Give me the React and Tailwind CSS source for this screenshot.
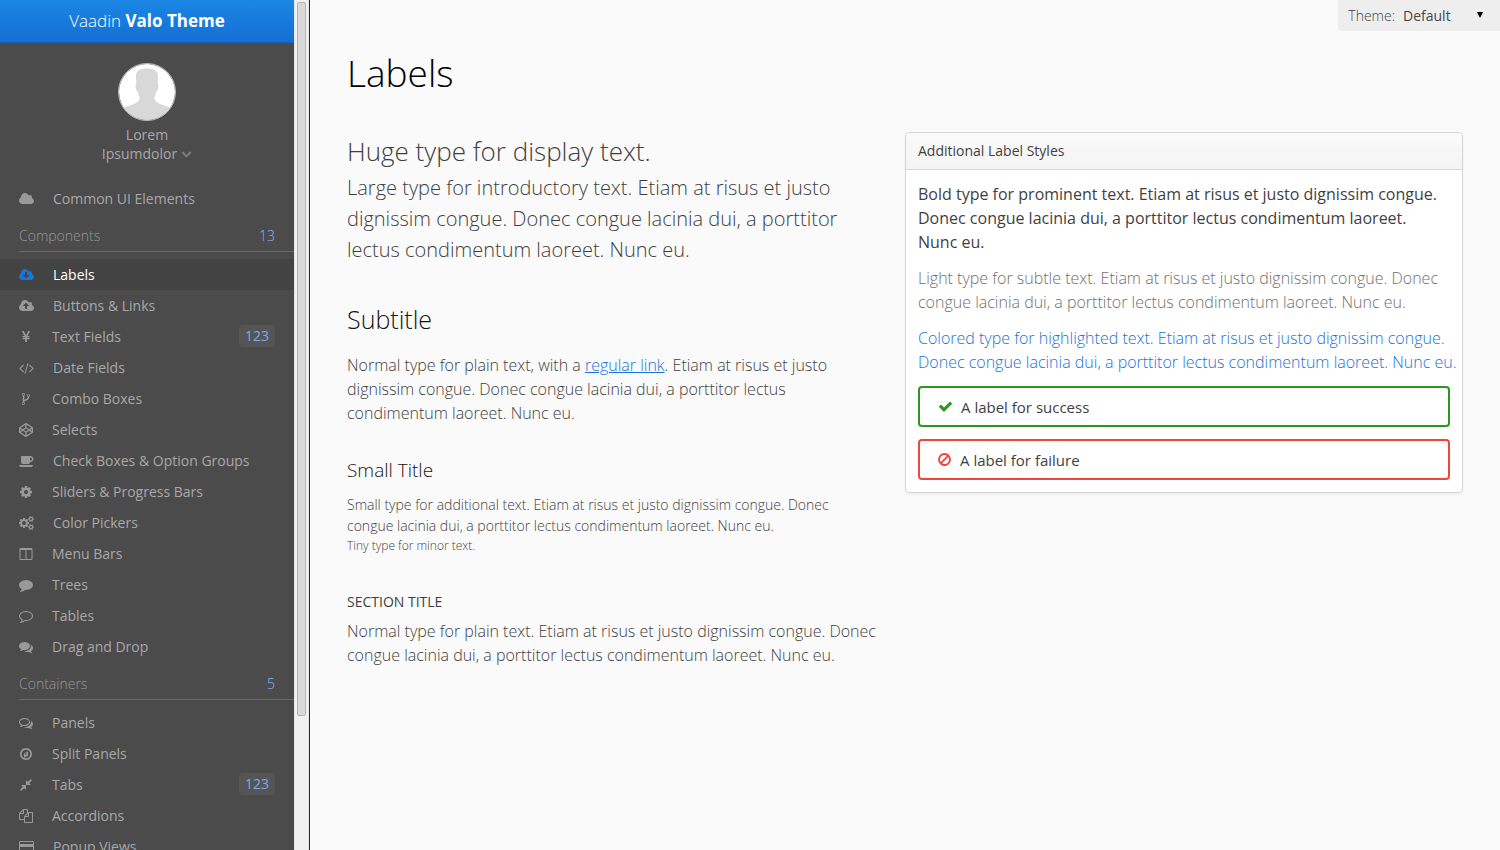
import React from "react";

const ICONS = {
  cloud: [1920, "M1920 1152q0 159-112.5 271.5t-271.5 112.5h-1088q-185 0-316.5-131.5t-131.5-316.5q0-132 71-241.5t187-163.5q-2-28-2-43 0-212 150-362t362-150q158 0 286.5 88t187.5 230q70-62 166-62 106 0 181 75t75 181q0 75-41 138 129 30 213 134.5t84 239.5z"],
  cloudDownload: [1920, "M1280 928q0-14-9-23t-23-9h-224v-352q0-13-9.5-22.5t-22.5-9.5h-192q-13 0-22.5 9.5t-9.5 22.5v352h-224q-13 0-22.5 9.5t-9.5 22.5q0 14 9 23l352 352q9 9 23 9t23-9l351-351q10-12 10-24zm640 224q0 159-112.5 271.5t-271.5 112.5h-1088q-185 0-316.5-131.5t-131.5-316.5q0-130 70-240t188-165q-2-30-2-43 0-212 150-362t362-150q156 0 285.5 87t188.5 231q71-62 166-62 106 0 181 75t75 181q0 76-41 138 130 31 213.5 135.5t83.5 238.5z"],
  cloudUpload: [1920, "M1280 864q0-14-9-23l-352-352q-9-9-23-9t-23 9l-351 351q-10 12-10 24 0 14 9 23t23 9h224v352q0 13 9.5 22.5t22.5 9.5h192q13 0 22.5-9.5t9.5-22.5v-352h224q13 0 22.5-9.5t9.5-22.5zm640 288q0 159-112.5 271.5t-271.5 112.5h-1088q-185 0-316.5-131.5t-131.5-316.5q0-130 70-240t188-165q-2-30-2-43 0-212 150-362t362-150q156 0 285.5 87t188.5 231q71-62 166-62 106 0 181 75t75 181q0 76-41 138 130 31 213.5 135.5t83.5 238.5z"],
  yen: [1792, "M985.5 1536h-172q-13 0-22.5-9t-9.5-23v-330h-288q-13 0-22.5-9t-9.5-23v-103q0-13 9.5-22.5t22.5-9.5h288v-85h-288q-13 0-22.5-9t-9.5-23v-104q0-13 9.5-22.5t22.5-9.5h214l-321-578q-8-16 0-32 10-16 28-16h194q19 0 29 18l215 425q19 38 56 125 10-24 30.5-68t27.5-61l191-420q8-19 29-19h191q17 0 27 16 9 14 1 31l-313 579h215q13 0 22.5 9.5t9.5 22.5v104q0 14-9.5 23t-22.5 9h-290v85h290q13 0 22.5 9.5t9.5 22.5v103q0 14-9.5 23t-22.5 9h-290v330q0 13-9.5 22.5t-22.5 9.5z"],
  code: [1920, "M617 1399l-50 50q-10 10-23 10t-23-10l-466-466q-10-10-10-23t10-23l466-466q10-10 23-10t23 10l50 50q10 10 10 23t-10 23l-393 393 393 393q10 10 10 23t-10 23zm591-1067l-373 1291q-4 13-15.5 19.5t-23.5 2.5l-62-17q-13-4-19.5-15.5t-2.5-24.5l373-1291q4-13 15.5-19.5t23.5-2.5l62 17q13 4 19.5 15.5t2.5 24.5zm657 651l-466 466q-10 10-23 10t-23-10l-50-50q-10-10-10-23t10-23l393-393-393-393q-10-10-10-23t10-23l50-50q10-10 23-10t23 10l466 466q10 10 10 23t-10 23z"],
  codeFork: [1792, "M672 1472q0-40-28-68t-68-28-68 28-28 68 28 68 68 28 68-28 28-68zm0-1152q0-40-28-68t-68-28-68 28-28 68 28 68 68 28 68-28 28-68zm640 128q0-40-28-68t-68-28-68 28-28 68 28 68 68 28 68-28 28-68zm96 0q0 52-26 96.5t-70 69.5q-2 287-226 414-67 38-203 81-128 40-169.5 71t-41.5 100v26q44 25 70 69.5t26 96.5q0 80-56 136t-136 56-136-56-56-136q0-52 26-96.5t70-69.5v-820q-44-25-70-69.5t-26-96.5q0-80 56-136t136-56 136 56 56 136q0 52-26 96.5t-70 69.5v497q54-26 154-57 55-17 87.5-29.5t70.5-31 59-39.5 40.5-51 28-69.5 8.5-91.5q-44-25-70-69.5t-26-96.5q0-80 56-136t136-56 136 56 56 136z"],
  codepen: [1792, "M216 1169l603 402v-359l-334-223zm-62-144l193-129-193-129v258zm819 546l603-402-269-180-334 223v359zm-77-493l272-182-272-182-272 182zm-411-275l334-223v-359l-603 402zm960 93l193 129v-258zm-138-93l269-180-603-402v359zm485-180v546q0 41-34 64l-819 546q-21 13-43 13t-43-13l-819-546q-34-23-34-64v-546q0-41 34-64l819-546q21-13 43-13t43 13l819 546q34 23 34 64z"],
  coffee: [1920, "M1664 640q0-80-56-136t-136-56h-64v384h64q80 0 136-56t56-136zm-1664 768h1792q0 106-75 181t-181 75h-1280q-106 0-181-75t-75-181zm1856-768q0 159-112.5 271.5t-271.5 112.5h-64v32q0 92-66 158t-158 66h-704q-92 0-158-66t-66-158v-736q0-26 19-45t45-19h1152q159 0 271.5 112.5t112.5 271.5z"],
  cog: [1792, "M1152 896q0-106-75-181t-181-75-181 75-75 181 75 181 181 75 181-75 75-181zm512-109v222q0 12-8 23t-20 13l-185 28q-19 54-39 91 35 50 107 138 10 12 10 25t-9 23q-27 37-99 108t-94 71q-12 0-26-9l-138-108q-44 23-91 38-16 136-29 186-7 28-36 28h-222q-14 0-24.5-8.5t-11.5-21.5l-28-184q-49-16-90-37l-141 107q-10 9-25 9-14 0-25-11-126-114-165-168-7-10-7-23 0-12 8-23 15-21 51-66.5t54-70.5q-27-50-41-99l-183-27q-13-2-21-12.5t-8-23.5v-222q0-12 8-23t19-13l186-28q14-46 39-92-40-57-107-138-10-12-10-24 0-10 9-23 26-36 98.5-107.5t94.5-71.5q13 0 26 10l138 107q44-23 91-38 16-136 29-186 7-28 36-28h222q14 0 24.5 8.5t11.5 21.5l28 184q49 16 90 37l142-107q9-9 24-9 13 0 25 10 129 119 165 170 7 8 7 22 0 12-8 23-15 21-51 66.5t-54 70.5q26 50 41 98l183 28q13 2 21 12.5t8 23.5z"],
  cogs: [1920, "M896 896q0-106-75-181t-181-75-181 75-75 181 75 181 181 75 181-75 75-181zm768 512q0-52-38-90t-90-38-90 38-38 90q0 53 37.5 90.5t90.5 37.5 90.5-37.5 37.5-90.5zm0-1024q0-52-38-90t-90-38-90 38-38 90q0 53 37.5 90.5t90.5 37.5 90.5-37.5 37.5-90.5zm-384 421v185q0 10-7 19.5t-16 10.5l-155 24q-11 35-32 76 34 48 90 115 7 11 7 20 0 12-7 19-23 30-82.5 89.5t-78.5 59.5q-11 0-21-7l-115-90q-37 19-77 31-11 108-23 155-7 24-30 24h-186q-11 0-20-7.5t-10-17.5l-23-153q-34-10-75-31l-118 89q-7 7-20 7-11 0-21-8-144-133-144-160 0-9 7-19 10-14 41-53t47-61q-23-44-35-82l-152-24q-10-1-17-9.5t-7-19.5v-185q0-10 7-19.5t16-10.5l155-24q11-35 32-76-34-48-90-115-7-11-7-20 0-12 7-20 22-30 82-89t79-59q11 0 21 7l115 90q34-18 77-32 11-108 23-154 7-24 30-24h186q11 0 20 7.5t10 17.5l23 153q34 10 75 31l118-89q8-7 20-7 11 0 21 8 144 133 144 160 0 8-7 19-12 16-42 54t-45 60q23 48 34 82l152 23q10 2 17 10.5t7 19.5zm640 533v140q0 16-149 31-12 27-30 52 51 113 51 138 0 4-4 7-122 71-124 71-8 0-46-47t-52-68q-20 2-30 2t-30-2q-14 21-52 68t-46 47q-2 0-124-71-4-3-4-7 0-25 51-138-18-25-30-52-149-15-149-31v-140q0-16 149-31 13-29 30-52-51-113-51-138 0-4 4-7 4-2 35-20t59-34 30-16q8 0 46 46.5t52 67.5q20-2 30-2t30 2q51-71 92-112l6-2q4 0 124 70 4 3 4 7 0 25-51 138 17 23 30 52 149 15 149 31zm0-1024v140q0 16-149 31-12 27-30 52 51 113 51 138 0 4-4 7-122 71-124 71-8 0-46-47t-52-68q-20 2-30 2t-30-2q-14 21-52 68t-46 47q-2 0-124-71-4-3-4-7 0-25 51-138-18-25-30-52-149-15-149-31v-140q0-16 149-31 13-29 30-52-51-113-51-138 0-4 4-7 4-2 35-20t59-34 30-16q8 0 46 46.5t52 67.5q20-2 30-2t30 2q51-71 92-112l6-2q4 0 124 70 4 3 4 7 0 25-51 138 17 23 30 52 149 15 149 31z"],
  columns: [1792, "M224 1536h608v-1152h-640v1120q0 13 9.5 22.5t22.5 9.5zm1376-32v-1120h-640v1152h608q13 0 22.5-9.5t9.5-22.5zm128-1216v1216q0 66-47 113t-113 47h-1344q-66 0-113-47t-47-113v-1216q0-66 47-113t113-47h1344q66 0 113 47t47 113z"],
  comment: [1792, "M1792 896q0 174-120 321.5t-326 233-450 85.5q-70 0-145-8-198 175-460 242-49 14-114 22-17 2-30.5-9t-17.5-29v-1q-3-4-.5-12t2-10 4.5-9.5l6-9 7-8.5 8-9q7-8 31-34.5t34.5-38 31-39.5 32.5-51 27-59 26-76q-157-89-247.5-220t-90.5-281q0-130 71-248.5t191-204.5 286-136.5 348-50.5q244 0 450 85.5t326 233 120 321.5z"],
  commentO: [1792, "M896 384q-204 0-381.5 69.5t-282 187.5-104.5 255q0 112 71.5 213.5t201.5 175.5l87 50-27 96q-24 91-70 172 152-63 275-171l43-38 57 6q69 8 130 8 204 0 381.5-69.5t282-187.5 104.5-255-104.5-255-282-187.5-381.5-69.5zm896 512q0 174-120 321.5t-326 233-450 85.5q-70 0-145-8-198 175-460 242-49 14-114 22h-5q-15 0-27-10.5t-16-27.5v-1q-3-4-.5-12t2-10 4.5-9.5l6-9 7-8.5 8-9q7-8 31-34.5t34.5-38 31-39.5 32.5-51 27-59 26-76q-157-89-247.5-220t-90.5-281q0-174 120-321.5t326-233 450-85.5 450 85.5 326 233 120 321.5z"],
  comments: [1792, "M1408 768q0 139-94 257t-256.5 186.5-353.5 68.5q-86 0-176-16-124 88-278 128-36 9-86 16h-3q-11 0-20.5-8t-11.5-21q-1-3-1-6.5t.5-6.5 2-6l2.5-5 3.5-5.5 4-5 4.5-5 4-4.5q5-6 23-25t26-29.5 22.5-29 25-38.5 20.5-44q-124-72-195-177t-71-224q0-139 94-257t256.5-186.5 353.5-68.5 353.5 68.5 256.5 186.5 94 257zm384 256q0 120-71 224.5t-195 176.5q10 24 20.5 44t25 38.5 22.5 29 26 29.5 23 25q1 1 4 4.5t4.5 5 4 5 3.5 5.5l2.5 5 2 6 .5 6.5-1 6.5q-3 14-13 22t-22 7q-50-7-86-16-154-40-278-128-90 16-176 16-271 0-472-132 58 4 88 4 161 0 309-45t264-129q125-92 192-212t67-254q0-77-23-152 129 71 204 178t75 230z"],
  commentsO: [1792, "M704 384q-153 0-286 52t-211.5 141-78.5 191q0 82 53 158t149 132l97 56-35 84q34-20 62-39l44-31 53 10q78 14 153 14 153 0 286-52t211.5-141 78.5-191-78.5-191-211.5-141-286-52zm0-128q191 0 353.5 68.5t256.5 186.5 94 257-94 257-256.5 186.5-353.5 68.5q-86 0-176-16-124 88-278 128-36 9-86 16h-3q-11 0-20.5-8t-11.5-21q-1-3-1-6.5t.5-6.5 2-6l2.5-5 3.5-5.5 4-5 4.5-5 4-4.5q5-6 23-25t26-29.5 22.5-29 25-38.5 20.5-44q-124-72-195-177t-71-224q0-139 94-257t256.5-186.5 353.5-68.5zm822 1169q10 24 20.5 44t25 38.5 22.5 29 26 29.5 23 25q1 1 4 4.5t4.5 5 4 5 3.5 5.5l2.5 5 2 6 .5 6.5-1 6.5q-3 14-13 22t-22 7q-50-7-86-16-154-40-278-128-90 16-176 16-271 0-472-132 58 4 88 4 161 0 309-45t264-129q125-92 192-212t67-254q0-77-23-152 129 71 204 178t75 230q0 120-71 224.5t-195 176.5z"],
  compass: [1792, "M768 1024l256-128-256-128v256zm384-435v542l-512 256v-542zm288 307q0-148-73-273t-198-198-273-73-273 73-198 198-73 273 73 273 198 198 273 73 273-73 198-198 73-273zm224 0q0 209-103 385.5t-279.5 279.5-385.5 103-385.5-103-279.5-279.5-103-385.5 103-385.5 279.5-279.5 385.5-103 385.5 103 279.5 279.5 103 385.5z"],
  compress: [1792, "M896 960v448q0 26-19 45t-45 19-45-19l-144-144-332 332q-10 10-23 10t-23-10l-114-114q-10-10-10-23t10-23l332-332-144-144q-19-19-19-45t19-45 45-19h448q26 0 45 19t19 45zm755-672q0 13-10 23l-332 332 144 144q19 19 19 45t-19 45-45 19h-448q-26 0-45-19t-19-45v-448q0-26 19-45t45-19 45 19l144 144 332-332q10-10 23-10t23 10l114 114q10 10 10 23z"],
  files: [1792, "M1696 384q40 0 68 28t28 68v1216q0 40-28 68t-68 28h-960q-40 0-68-28t-28-68v-288h-544q-40 0-68-28t-28-68v-672q0-40 20-88t48-76l408-408q28-28 76-48t88-20h416q40 0 68 28t28 68v328q68-40 128-40h416zm-544 213l-299 299h299v-299zm-640-384l-299 299h299v-299zm196 647l316-316v-416h-384v416q0 40-28 68t-68 28h-416v640h512v-256q0-40 20-88t48-76zm956 804v-1152h-384v416q0 40-28 68t-68 28h-416v640h896z"],
  card: [1920, "M1760 128q66 0 113 47t47 113v1216q0 66-47 113t-113 47h-1600q-66 0-113-47t-47-113v-1216q0-66 47-113t113-47h1600zm-1600 128q-13 0-22.5 9.5t-9.5 22.5v224h1664v-224q0-13-9.5-22.5t-22.5-9.5h-1600zm1600 1280q13 0 22.5-9.5t9.5-22.5v-608h-1664v608q0 13 9.5 22.5t22.5 9.5h1600zm-1504-128v-128h256v128h-256zm384 0v-128h384v128h-384z"],
  check: [1792, "M1671 566q0 40-28 68l-724 724-136 136q-28 28-68 28t-68-28l-136-136-362-362q-28-28-28-68t28-68l136-136q28-28 68-28t68 28l294 295 656-657q28-28 68-28t68 28l136 136q28 28 28 68z"],
  ban: [1792, "M1440 893q0-161-87-295l-754 753q137 89 297 89 111 0 211.5-43.5t173.5-116.5 116-174.5 43-212.5zm-999 299l755-754q-135-91-300-91-148 0-273 73t-198 199-73 274q0 162 89 299zm1223-299q0 157-61 300t-163.5 246-245 164-298.5 61-298.5-61-245-164-163.5-246-61-300 61-299.5 163.5-245.5 245-164 298.5-61 298.5 61 245 164 163.5 245.5 61 299.5z"],
  chevronDown: [1792, "M1683 808l-742 741q-19 19-45 19t-45-19l-742-741q-19-19-19-45.5t19-45.5l166-165q19-19 45-19t45 19l531 531 531-531q19-19 45-19t45 19l166 165q19 19 19 45.5t-19 45.5z"],
};

function Icon({ name, size, className = "" }) {
  const [width, path] = ICONS[name];
  const box = size || (width === 1920 ? "h-[14px] w-[15px]" : "size-[14px]");
  return (
    <svg viewBox={`0 0 ${width} 1792`} className={`shrink-0 fill-current ${box} ${className}`} aria-hidden="true">
      <path d={path} />
    </svg>
  );
}

const COMPONENTS = [
  { icon: "cloudDownload", label: "Labels", selected: true },
  { icon: "cloudUpload", label: "Buttons & Links" },
  { icon: "yen", label: "Text Fields", badge: "123" },
  { icon: "code", label: "Date Fields" },
  { icon: "codeFork", label: "Combo Boxes" },
  { icon: "codepen", label: "Selects" },
  { icon: "coffee", label: "Check Boxes & Option Groups" },
  { icon: "cog", label: "Sliders & Progress Bars" },
  { icon: "cogs", label: "Color Pickers" },
  { icon: "columns", label: "Menu Bars" },
  { icon: "comment", label: "Trees" },
  { icon: "commentO", label: "Tables" },
  { icon: "comments", label: "Drag and Drop" },
];

const CONTAINERS = [
  { icon: "commentsO", label: "Panels" },
  { icon: "compass", label: "Split Panels" },
  { icon: "compress", label: "Tabs", badge: "123" },
  { icon: "files", label: "Accordions" },
  { icon: "card", label: "Popup Views" },
];

function MenuItem({ icon, label, badge, selected }) {
  return (
    <a
      href="#"
      aria-current={selected ? "page" : undefined}
      className={`flex h-[31px] shrink-0 items-center px-[19px] ${selected ? "bg-[#434343] text-white" : "text-[#a8a8a8]"}`}
    >
      <Icon name={icon} className={selected ? "text-[#1b74d4]" : "text-[#999999]"} />
      <span className="ml-[19px] flex-1">{label}</span>
      {badge && (
        <span className="-mt-px rounded bg-[#555555] px-[6px] leading-[22px] text-[#78abec]">{badge}</span>
      )}
    </a>
  );
}

function MenuSection({ title, count, items }) {
  return (
    <section className="flex flex-col">
      <h2 className="mb-[7px] ml-[19px] flex h-[38px] items-center justify-between border-b border-[#686868] pt-[6px] pr-[19px] font-light text-[#969696]">
        {title}
        <span className="text-[#84b6f5]">{count}</span>
      </h2>
      {items.map((item) => (
        <MenuItem key={item.label} {...item} />
      ))}
    </section>
  );
}

function Sidebar() {
  return (
    <aside className="flex w-[310px] shrink-0 border-r border-[#24282c] bg-[#4b4b4b] text-[14px]">
      <nav className="flex min-w-0 flex-1 flex-col overflow-hidden">
        <div className="flex h-[43px] shrink-0 items-center justify-center border-b border-[#1560b5] bg-linear-to-b from-[#1b87e3] to-[#166ed5] text-[17px] text-white">
          <span className="font-light">
            Vaadin <b className="font-bold">Valo Theme</b>
          </span>
        </div>
        <button className="mx-auto my-[20px] flex w-[110px] flex-col items-center leading-[19px] text-[#a8a8a8]">
          <svg viewBox="0 0 58 58" className="mb-[4px] size-[58px]" aria-hidden="true">
            <clipPath id="avatar-clip">
              <circle cx="29" cy="29" r="28" />
            </clipPath>
            <circle cx="29" cy="29" r="28" fill="#ffffff" />
            <path
              clipPath="url(#avatar-clip)"
              fill="#d8d8d8"
              d="M29 5.500C35 5.500 39.500 7.500 40 12C40.200 15 39.600 18 39.800 20.500C41 23 40.500 27 38.500 28.500C38 31 37 33 36.200 34.500C36.500 37.500 38.500 39.500 42 41C47 43 52 44 54 46L54 58H4L4 46C6 44 11 43 16 41C19.500 39.500 21.500 37.500 21.800 34.500C21 33 20 31 19.500 28.500C17.500 27 17 23 18.200 20.500C18.400 18 17.800 15 18 12C18.500 7.500 23 5.500 29 5.500Z"
            />
            <circle cx="29" cy="29" r="28.500" fill="none" stroke="#bdbdbd" />
          </svg>
          <span>Lorem</span>
          <span className="flex items-center gap-[4px]">
            Ipsumdolor
            <Icon name="chevronDown" size="size-[11px]" className="text-[#7c7c7c]" />
          </span>
        </button>
        <MenuItem icon="cloud" label="Common UI Elements" />
        <MenuSection title="Components" count="13" items={COMPONENTS} />
        <MenuSection title="Containers" count="5" items={CONTAINERS} />
      </nav>
      <div className="w-[15px] border-x border-[#e6e6e6] bg-[#f1f1f1] px-[2px] py-[2px]" aria-hidden="true">
        <div className="h-[84.4%] rounded-xs border border-[#b5b5b5] bg-[#d9d9d9]" />
      </div>
    </aside>
  );
}

function ThemeSelector() {
  return (
    <div className="absolute top-0 right-0 flex h-[31px] items-center rounded-bl bg-[#eeeeee] pl-[10px] text-[14px]">
      <label htmlFor="theme">Theme:</label>
      <select
        id="theme"
        className="h-full w-[105px] appearance-none bg-transparent pl-[8px] font-normal text-[#474747]"
      >
        <option>Default</option>
      </select>
      <svg viewBox="0 0 6 6" className="pointer-events-none absolute right-[17px] mb-[2px] size-[6px] fill-black" aria-hidden="true">
        <path d="M0 0h6L3 6z" />
      </svg>
    </div>
  );
}

function LabelTypes() {
  return (
    <div className="pr-6">
      <p className="mb-[2px] text-[26px] leading-[38px]">Huge type for display text.</p>
      <p className="text-[20px] leading-[31px]">
        Large type for introductory text. Etiam at risus et justo dignissim congue. Donec congue lacinia dui, a
        porttitor lectus condimentum laoreet. Nunc eu.
      </p>
      <h2 className="mt-[37px] mb-[17px] text-[25px] leading-[34px] text-[#141414]">Subtitle</h2>
      <p>
        Normal type for plain text, with a{" "}
        <a href="#" className="text-[#1874d8] underline">
          regular link
        </a>
        . Etiam at risus et justo dignissim congue. Donec congue lacinia dui, a porttitor lectus condimentum laoreet.
        Nunc eu.
      </p>
      <h3 className="mt-[33px] mb-[12px] text-[19px] leading-[24px] text-[#141414]">Small Title</h3>
      <p className="text-[14px] leading-[21px]">
        Small type for additional text. Etiam at risus et justo dignissim congue. Donec
        <br /> congue lacinia dui, a porttitor lectus condimentum laoreet. Nunc eu.
      </p>
      <p className="text-[12px] leading-[19px]">Tiny type for minor text.</p>
      <h4 className="mt-[37px] mb-[7px] text-[14px] leading-[20px] font-normal uppercase">Section Title</h4>
      <p>
        Normal type for plain text. Etiam at risus et justo dignissim congue. Donec congue lacinia dui, a porttitor
        lectus condimentum laoreet. Nunc eu.
      </p>
    </div>
  );
}

function LabelPanel() {
  return (
    <section className="self-start rounded border border-[#d5d5d5] bg-white shadow-[0_2px_3px_rgba(0,0,0,0.05)]">
      <h2 className="flex h-[37px] items-center rounded-t border-b border-[#d5d5d5] bg-linear-to-b from-[#fafafa] to-[#f4f4f4] px-3 text-[14px] font-normal">
        Additional Label Styles
      </h2>
      <div className="flex flex-col gap-3 py-3 pr-1 pl-3">
        <p className="font-normal">
          Bold type for prominent text. Etiam at risus et justo dignissim congue. Donec congue lacinia dui, a porttitor
          lectus condimentum laoreet. Nunc&nbsp;eu.
        </p>
        <p className="text-[#707070]">
          Light type for subtle text. Etiam at risus et justo dignissim congue. Donec congue lacinia dui, a porttitor
          lectus condimentum laoreet. Nunc eu.
        </p>
        <p className="text-[#1874d8]">
          Colored type for highlighted text. Etiam at risus et justo dignissim congue. Donec congue lacinia dui, a
          porttitor lectus condimentum laoreet. Nunc eu.
        </p>
        <p className="mr-2 flex h-[41px] items-center gap-2 rounded border-2 border-[#2c9720] px-[18px] text-[15px] font-normal">
          <Icon name="check" size="size-[15px]" className="text-[#2c9720]" />A label for success
        </p>
        <p className="mr-2 flex h-[41px] items-center gap-2 rounded border-2 border-[#ed473b] px-[17px] text-[15px] font-normal">
          <Icon name="ban" size="size-[15px]" className="text-[#ed473b]" />A label for failure
        </p>
      </div>
    </section>
  );
}

export default function App() {
  return (
    <div className="flex h-screen bg-[#fafafa] font-['Open_Sans',sans-serif] text-[16px] leading-[24px] text-[#3f3f3f]">
      <Sidebar />
      <main className="relative min-w-0 flex-1 overflow-auto px-[37px] font-light">
        <ThemeSelector />
        <h1 className="mt-[49px] mb-[35px] text-[37px] leading-[48px] text-black">Labels</h1>
        <div className="grid grid-cols-2">
          <LabelTypes />
          <LabelPanel />
        </div>
      </main>
    </div>
  );
}
